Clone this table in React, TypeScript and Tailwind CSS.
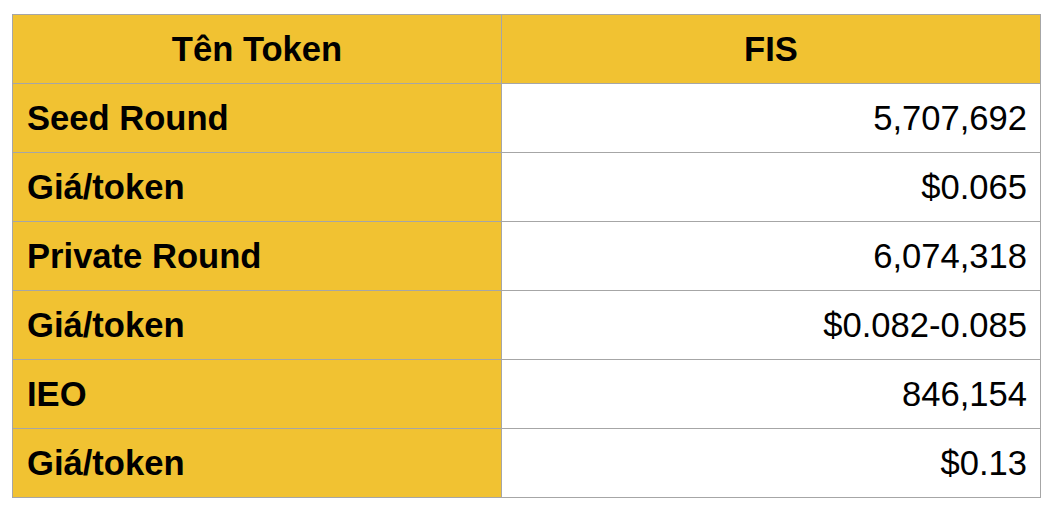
const rows = [
  { label: "Seed Round", value: "5,707,692" },
  { label: "Giá/token", value: "$0.065" },
  { label: "Private Round", value: "6,074,318" },
  { label: "Giá/token", value: "$0.082-0.085" },
  { label: "IEO", value: "846,154" },
  { label: "Giá/token", value: "$0.13" },
];

export default function App() {
  return (
    <div className="w-[1052px] h-[513px] bg-white pt-[14px] pl-[12px] font-['Liberation_Sans',Arial,sans-serif] text-black">
      <table className="w-[1029px] border-collapse table-fixed text-[34.6px] leading-none">
        <colgroup>
          <col className="w-[489px]" />
          <col />
        </colgroup>
        <thead>
          <tr className="h-[69px] bg-[#f1c232]">
            <th className="border border-[#a6a6a6] font-bold text-center">Tên Token</th>
            <th className="border border-[#a6a6a6] font-bold text-center">FIS</th>
          </tr>
        </thead>
        <tbody>
          {rows.map((row, i) => (
            <tr key={i} className="h-[69px]">
              <td className="border border-[#a6a6a6] bg-[#f1c232] font-bold pl-[14px] text-left">
                {row.label}
              </td>
              <td className="border border-[#a6a6a6] bg-white pr-[13px] text-right">
                {row.value}
              </td>
            </tr>
          ))}
        </tbody>
      </table>
    </div>
  );
}
